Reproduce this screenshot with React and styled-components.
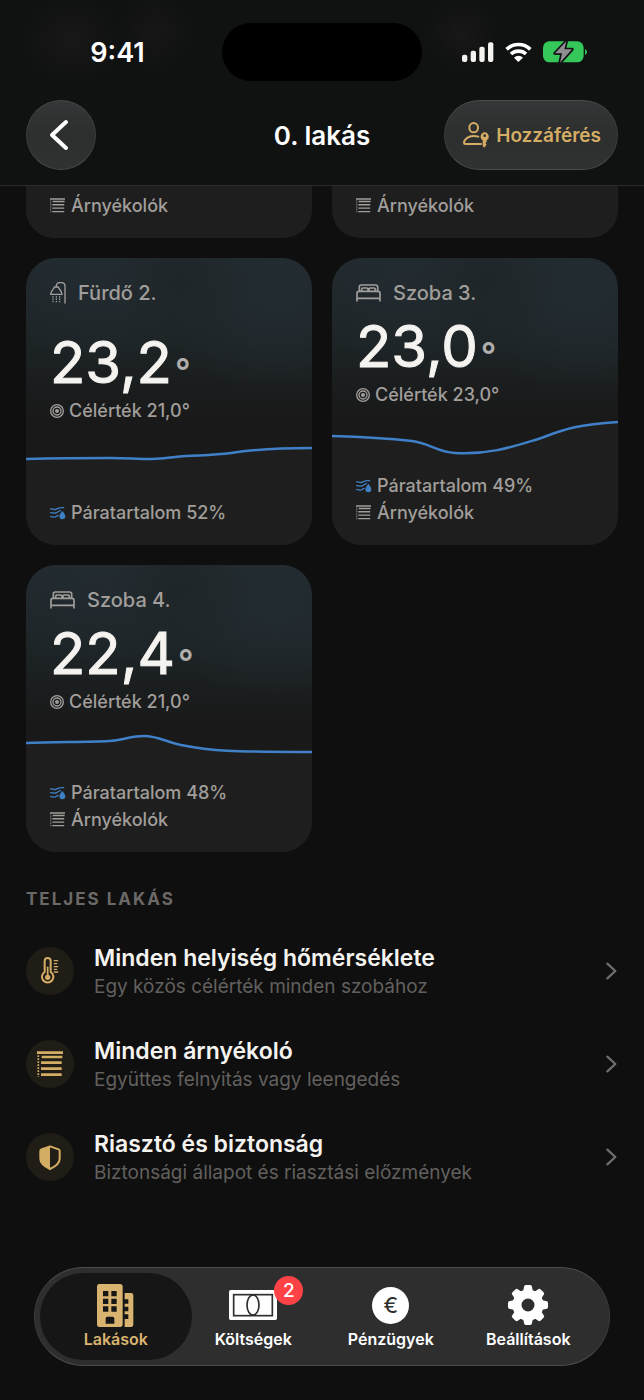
import React from 'react'
import styled, { createGlobalStyle } from 'styled-components'

const GlobalStyle = createGlobalStyle`
  * {
    box-sizing: border-box;
  }

  body {
    margin: 0;
    background: #0f0f0f;
    color: #f5f3f0;
    font-family: Inter, "Liberation Sans", sans-serif;
    -webkit-font-smoothing: antialiased;
  }

  button {
    font-family: inherit;
    cursor: pointer;
  }

  svg {
    display: block;
    flex-shrink: 0;
  }
`

const Page = styled.div`
  min-height: 100vh;
  display: flex;
  flex-direction: column;
`

const Header = styled.header`
  padding: 23px 26px 15px;
  border-bottom: 1px solid #2a2a2a;
  background:
    radial-gradient(ellipse 50px 44px at 72px 40px, #181818, transparent),
    radial-gradient(ellipse 36px 40px at 155px 32px, #171717, transparent),
    radial-gradient(ellipse 36px 36px at 462px 34px, #181818, transparent),
    #101111;
`

const StatusBar = styled.div`
  display: grid;
  grid-template-columns: 1fr 200px 1fr;
  align-items: center;
`

const Clock = styled.time`
  padding-right: 13px;
  text-align: center;
  font-size: 27px;
  font-weight: 600;
  color: #fff;
`

const Island = styled.div`
  height: 58px;
  border-radius: 29px;
  background: #000;
`

const StatusIcons = styled.div`
  display: flex;
  justify-content: center;
  align-items: center;
  gap: 11px;
  padding-left: 9px;
`

const TitleBar = styled.div`
  display: grid;
  grid-template-columns: 1fr auto 1fr;
  align-items: center;
  margin-top: 19px;
`

const Title = styled.h1`
  margin: 0;
  font-size: 26px;
  font-weight: 600;
  color: #fff;
`

const GlassButton = styled.button`
  display: flex;
  align-items: center;
  justify-content: center;
  gap: 7px;
  height: 70px;
  min-width: 70px;
  padding: ${({ $wide }) => ($wide ? '0 16px 0 18px' : '0 4px 0 0')};
  justify-self: ${({ $wide }) => ($wide ? 'end' : 'start')};
  border: 1px solid #4a4b4c;
  border-left-color: #3c3d3d;
  border-right-color: #3c3d3d;
  border-radius: 35px;
  background: linear-gradient(#343637, #2d2e2e 50%, #303131);
  color: ${({ $wide }) => ($wide ? '#d4ad65' : '#fff')};
  font-size: 19px;
  font-weight: 600;
`

const Main = styled.main`
  padding: 0 26px;
`

const CardGrid = styled.div`
  display: grid;
  grid-template-columns: 1fr 1fr;
  gap: 20px;
`

const CardTail = styled.div`
  padding: 6px 24px 19px;
  border-radius: 0 0 28px 28px;
  background: #1e1e1e;
`

const Card = styled.article`
  display: flex;
  flex-direction: column;
  min-height: 287px;
  border-radius: 30px;
  overflow: hidden;
  background:
    radial-gradient(ellipse 70px 60px at 54% 8%, rgba(30, 37, 39, 0.8), transparent),
    radial-gradient(ellipse 110px 100px at 88% 14%, rgba(36, 46, 53, 0.7), transparent),
    radial-gradient(ellipse 120px 90px at 28% 6%, rgba(35, 44, 51, 0.7), transparent),
    linear-gradient(#212a2d, #1d2426 30%, #1a1c1d 46%, #191919 56%);
`

const CardHead = styled.div`
  flex: 1;
  padding: 23px 24px 7px;
`

const RoomName = styled.h2`
  display: flex;
  align-items: center;
  gap: 12px;
  margin: 0;
  color: #a19e9b;
  font-size: 20px;
  font-weight: 500;
  line-height: 24px;
`

const Temperature = styled.div`
  display: flex;
  align-items: baseline;
  gap: 3px;
  margin: ${({ $roomy }) => ($roomy ? 27 : 11)}px 0 5px;
  font-size: 58px;
  font-weight: 400;
  line-height: 60px;
  -webkit-text-stroke: 1px #f5f3f0;
`

const Degree = styled.span`
  color: #b0aeac;
  font-size: 34px;
  font-weight: 600;
  line-height: 34px;
  -webkit-text-stroke: 0;
`

const Detail = styled.div`
  display: flex;
  align-items: center;
  gap: ${({ $tight }) => ($tight ? 5 : 6)}px;
  color: #a19e9b;
  font-size: 18px;
  font-weight: 500;
  line-height: 27px;
`

const CardFoot = styled.div`
  padding: 12px 24px 19px;
  background: #1e1e1e;
`

const Chart = styled.svg`
  width: 100%;
  height: 45px;
`

const SectionTitle = styled.h2`
  margin: 35px 0 31px;
  color: #6b6966;
  font-size: 17px;
  font-weight: 700;
  letter-spacing: 2px;
  line-height: 24px;
`

const ActionList = styled.nav`
  display: flex;
  flex-direction: column;
  gap: 35px;
`

const Action = styled.a`
  display: flex;
  align-items: center;
  gap: 20px;
  color: inherit;
  text-decoration: none;
`

const ActionIcon = styled.span`
  display: grid;
  place-items: center;
  width: 48px;
  height: 48px;
  border-radius: 50%;
  background: #201d17;
  color: #d4ad65;
`

const ActionText = styled.span`
  flex: 1;
  display: flex;
  flex-direction: column;
  padding-top: 2px;
`

const ActionTitle = styled.span`
  font-size: 23px;
  font-weight: 600;
  line-height: 29px;
`

const ActionNote = styled.span`
  color: #62605e;
  font-size: 19px;
  line-height: 27px;
`

const TabBar = styled.nav`
  display: grid;
  grid-template-columns: repeat(4, 1fr);
  margin: auto 34px 34px;
  padding: 5px 12px;
  border: 1px solid #4b4b4b;
  border-left-color: #3a3a3a;
  border-right-color: #3a3a3a;
  border-radius: 50px;
  background: #2e2e2e;
`

const Tab = styled.a`
  display: flex;
  flex-direction: column;
  align-items: center;
  margin: 0 -7px;
  padding: 10px 0 9px;
  border-radius: 44px;
  background: ${({ $active }) => ($active ? '#161616' : 'transparent')};
  color: ${({ $active }) => ($active ? '#d9b470' : '#fff')};
  font-size: 16px;
  font-weight: 600;
  line-height: 24px;
  text-decoration: none;
`

const TabIcon = styled.span`
  position: relative;
  display: grid;
  place-items: center;
  height: 44px;
`

const Badge = styled.span`
  position: absolute;
  top: -7px;
  right: -26px;
  width: 29px;
  height: 29px;
  border-radius: 50%;
  background: #ff4245;
  color: #fff;
  font-size: 19px;
  font-weight: 500;
  line-height: 29px;
  text-align: center;
`

const Coin = styled.span`
  width: 37px;
  height: 37px;
  border-radius: 50%;
  background: #fff;
  color: #2e2e2e;
  font-size: 22px;
  font-weight: 400;
  line-height: 37px;
  text-align: center;
`

const SignalIcon = () => (
  <svg width="32" height="20" viewBox="0 0 96 60" fill="currentColor">
    <rect x="0" y="38" width="16" height="22" rx="6" />
    <rect x="26" y="26" width="16" height="34" rx="6" />
    <rect x="52" y="14" width="16" height="46" rx="6" />
    <rect x="78" y="1" width="16" height="59" rx="6" />
  </svg>
)

const WifiIcon = () => (
  <svg width="27" height="20" viewBox="0 0 81 60" fill="none" stroke="#fff" strokeWidth="11">
    <path d="M5 22a51 51 0 0 1 71 0" />
    <path d="M18 36a33 33 0 0 1 45 0" />
    <path d="M40 60L27 47a19 19 0 0 1 27 0z" fill="#fff" stroke="none" />
  </svg>
)

const BatteryIcon = () => (
  <svg width="44" height="22" viewBox="0 0 132 66">
    <rect x="0" y="1" width="122" height="63" rx="19" fill="#35c759" />
    <path d="M126 24q6 3 6 9t-6 9z" fill="#35c759" />
    <path
      d="M70 1L36 37h21l-6 28 36-40H64z"
      fill="#8e8e93"
      stroke="#101111"
      strokeWidth="10"
      strokeLinejoin="round"
      paintOrder="stroke"
    />
  </svg>
)

const BackIcon = () => (
  <svg width="20" height="32" viewBox="0 0 20 32" fill="none" stroke="currentColor" strokeWidth="4" strokeLinecap="round" strokeLinejoin="round">
    <path d="M17 3L3 16l14 13" />
  </svg>
)

const ChevronIcon = () => (
  <svg width="13" height="18" viewBox="0 0 39 54" fill="none" stroke="#706e6c" strokeWidth="7" strokeLinecap="round" strokeLinejoin="round">
    <path d="M7 5l24 22L7 49" />
  </svg>
)

const PersonKeyIcon = () => (
  <svg width="26" height="26" viewBox="0 0 78 78" fill="none" stroke="currentColor" strokeWidth="6">
    <ellipse cx="32" cy="17" rx="13" ry="14" />
    <path d="M54 66H7q-4 0-4-4c1-10 12-20 29-20q8 0 14 2" strokeLinecap="round" />
    <path
      d="M65 31a13 13 0 0 1 6 24v4l-4 4 4 4-3 4-4 6-5-5V55a13 13 0 0 1 6-24zm0 6a4 4 0 0 0 0 8 4 4 0 0 0 0-8z"
      fill="currentColor"
      fillRule="evenodd"
      stroke="none"
    />
  </svg>
)

const ShowerIcon = () => (
  <svg width="16" height="22" viewBox="0 0 48 66" fill="none" stroke="currentColor" strokeWidth="4" strokeLinecap="round">
    <path d="M19 14C18 7 22 2 28 2h6c7 0 11 5 11 11v50" />
    <path d="M2 37h34l-1-4C33 24 27 22 25 15H13C12 22 5 24 3 33z" strokeLinejoin="round" />
    <path d="M9 44v20M19 44v20M29 44v20" strokeDasharray="1 6" />
  </svg>
)

const BedIcon = () => (
  <svg width="25" height="18" viewBox="0 0 75 54" fill="none" stroke="currentColor" strokeWidth="5" strokeLinejoin="round" strokeLinecap="round">
    <path d="M10 22V9q0-6 6-6h43q6 0 6 6v13" />
    <path d="M17 21v-5q0-4 4-4h11q4 0 4 4v5M39 21v-5q0-4 4-4h11q4 0 4 4v5" />
    <path d="M3 51V28q0-6 6-6h57q6 0 6 6v23M3 43h69" />
  </svg>
)

const TargetIcon = () => (
  <svg width="14" height="14" viewBox="0 0 42 42" fill="none" stroke="currentColor" strokeWidth="4">
    <circle cx="21" cy="21" r="19" />
    <circle cx="21" cy="21" r="12" />
    <circle cx="21" cy="21" r="6" fill="currentColor" stroke="none" />
  </svg>
)

const HumidityIcon = () => (
  <svg width="16" height="14" viewBox="0 0 48 42" fill="none" stroke="#3f7fc4" strokeWidth="4" strokeLinecap="round">
    <path d="M2 9c6-1 8 3 15 1S27 3 41 5" />
    <path d="M2 20c6-1 8 3 15 1s8-6 14-7" />
    <path d="M2 32c6-1 8 3 13 1s6-4 9-5" />
    <path d="M37 14c5 7 9 12 9 17a9 9 0 0 1-18 0c0-5 4-10 9-17z" fill="#3f7fc4" stroke="none" />
  </svg>
)

const BlindsIcon = ({ size, slat }) => (
  <svg width={size} height={size} viewBox="0 0 78 78" fill="none" stroke="currentColor" strokeWidth={slat}>
    <path d="M0 5h78M14 18h62M12 35h62M12 53h62M12 71h62" />
    <path d="M4 13v64" strokeWidth="5" strokeDasharray="5 4" />
  </svg>
)

const ThermometerIcon = () => (
  <svg width="18" height="28" viewBox="0 0 54 84" fill="none" stroke="currentColor" strokeWidth="6" strokeLinecap="round">
    <path d="M11 45V12a9 9 0 0 1 18 0v33a17 17 0 1 1-18 0z" />
    <path d="M20 31v28" strokeWidth="5" />
    <circle cx="20" cy="61" r="8" fill="currentColor" stroke="none" />
    <path d="M40 11h10M40 20h7M40 29h10M40 37h7M40 45h10" strokeWidth="4" />
  </svg>
)

const ShieldIcon = () => (
  <svg width="22" height="25" viewBox="0 0 66 75" fill="none" stroke="currentColor" strokeWidth="6" strokeLinejoin="round">
    <path d="M33 4l26 9q3 1 3 5v23c0 14-12 23-29 31C16 64 4 55 4 41V18q0-4 3-5z" />
    <path d="M33 4v68C16 64 4 55 4 41V18q0-4 3-5z" fill="currentColor" stroke="none" />
  </svg>
)

const BuildingsIcon = () => (
  <svg width="37" height="43" viewBox="0 0 111 129" fill="currentColor">
    <path
      fillRule="evenodd"
      d="M7 0h62q8 0 8 8v113q0 8-8 8H7q-7 0-7-8V8q0-8 7-8zM18 21v16h16V21zm25 0v16h16V21zM18 44v16h16V44zm25 0v16h16V44zM18 67v16h16V67zm25 0v16h16V67zM26 119h26v-16q0-5-5-5H31q-5 0-5 5z"
    />
    <path d="M83 27h19q7 0 7 8v86q0 8-7 8H83v-24h11V91H83v-9h11V68H83v-9h11V46H83z" />
  </svg>
)

const BanknoteIcon = () => (
  <svg width="48" height="30" viewBox="0 0 144 90" fill="none" stroke="#2e2e2e" strokeWidth="5">
    <rect width="144" height="90" rx="5" fill="#fff" stroke="none" />
    <rect x="14" y="14" width="116" height="63" />
    <ellipse cx="72" cy="45" rx="18" ry="30" />
  </svg>
)

const GearIcon = () => (
  <svg width="40" height="40" viewBox="-20 -20 40 40" fill="currentColor">
    <circle r="11" fill="none" stroke="currentColor" strokeWidth="9" />
    {[0, 45, 90, 135, 180, 225, 270, 315].map(angle => (
      <path key={angle} d="M-5-13l1-5q0-2 2-2h4q2 0 2 2l1 5z" transform={`rotate(${angle})`} />
    ))}
  </svg>
)

const rooms = [
  {
    name: 'Fürdő 2.',
    icon: <ShowerIcon />,
    temperature: '23,2',
    target: '21,0°',
    humidity: '52%',
    line: 'M0 17C40 16 60 16 85 16C100 16 110 17 120 17C135 17 145 15 160 14C180 13 190 13 205 11C225 8 245 6 286 6',
  },
  {
    name: 'Szoba 3.',
    icon: <BedIcon />,
    temperature: '23,0',
    target: '23,0°',
    humidity: '49%',
    blinds: true,
    line: 'M0 21C35 22 62 24 80 26C97 28 105 37 123 38C155 40 180 32 203 25C225 18 235 10 286 7',
  },
  {
    name: 'Szoba 4.',
    icon: <BedIcon />,
    temperature: '22,4',
    target: '21,0°',
    humidity: '48%',
    blinds: true,
    line: 'M0 21C35 20 65 20 83 19C97 18 105 14 118 14C132 14 140 20 155 23C185 29 205 30 286 30',
  },
]

const actions = [
  {
    title: 'Minden helyiség hőmérséklete',
    note: 'Egy közös célérték minden szobához',
    icon: <ThermometerIcon />,
    href: '#homerseklet',
  },
  {
    title: 'Minden árnyékoló',
    note: 'Együttes felnyitás vagy leengedés',
    icon: <BlindsIcon size={26} slat={8} />,
    href: '#arnyekolok',
  },
  {
    title: 'Riasztó és biztonság',
    note: 'Biztonsági állapot és riasztási előzmények',
    icon: <ShieldIcon />,
    href: '#riaszto',
  },
]

const tabs = [
  { label: 'Lakások', icon: <BuildingsIcon />, href: '#lakasok', active: true },
  { label: 'Költségek', icon: <BanknoteIcon />, href: '#koltsegek', badge: 2 },
  { label: 'Pénzügyek', icon: <Coin>€</Coin>, href: '#penzugyek' },
  { label: 'Beállítások', icon: <GearIcon />, href: '#beallitasok' },
]

const BlindsRow = () => (
  <Detail>
    <BlindsIcon size={15} slat={7} />
    Árnyékolók
  </Detail>
)

function RoomCard({ room }) {
  return (
    <Card>
      <CardHead>
        <RoomName>
          {room.icon}
          {room.name}
        </RoomName>
        <Temperature $roomy={!room.blinds}>
          {room.temperature}
          <Degree>°</Degree>
        </Temperature>
        <Detail $tight>
          <TargetIcon />
          Célérték {room.target}
        </Detail>
      </CardHead>
      <Chart viewBox="0 0 286 45" preserveAspectRatio="none">
        <path d={`${room.line}V45H0z`} fill="#1e1e1e" />
        <path d={room.line} fill="none" stroke="#3f80c8" strokeWidth="2.500" />
      </Chart>
      <CardFoot>
        <Detail $tight>
          <HumidityIcon />
          Páratartalom {room.humidity}
        </Detail>
        {room.blinds && <BlindsRow />}
      </CardFoot>
    </Card>
  )
}

function App() {
  return (
    <Page>
      <GlobalStyle />
      <Header>
        <StatusBar>
          <Clock>9:41</Clock>
          <Island />
          <StatusIcons>
            <SignalIcon />
            <WifiIcon />
            <BatteryIcon />
          </StatusIcons>
        </StatusBar>
        <TitleBar>
          <GlassButton aria-label="Vissza">
            <BackIcon />
          </GlassButton>
          <Title>0. lakás</Title>
          <GlassButton $wide>
            <PersonKeyIcon />
            Hozzáférés
          </GlassButton>
        </TitleBar>
      </Header>

      <Main>
        <CardGrid>
          <CardTail>
            <BlindsRow />
          </CardTail>
          <CardTail>
            <BlindsRow />
          </CardTail>
          {rooms.map(room => (
            <RoomCard key={room.name} room={room} />
          ))}
        </CardGrid>

        <SectionTitle>TELJES LAKÁS</SectionTitle>
        <ActionList>
          {actions.map(action => (
            <Action key={action.title} href={action.href}>
              <ActionIcon>{action.icon}</ActionIcon>
              <ActionText>
                <ActionTitle>{action.title}</ActionTitle>
                <ActionNote>{action.note}</ActionNote>
              </ActionText>
              <ChevronIcon />
            </Action>
          ))}
        </ActionList>
      </Main>

      <TabBar>
        {tabs.map(tab => (
          <Tab key={tab.label} href={tab.href} $active={tab.active}>
            <TabIcon>
              {tab.icon}
              {tab.badge && <Badge>{tab.badge}</Badge>}
            </TabIcon>
            {tab.label}
          </Tab>
        ))}
      </TabBar>
    </Page>
  )
}

export default App
